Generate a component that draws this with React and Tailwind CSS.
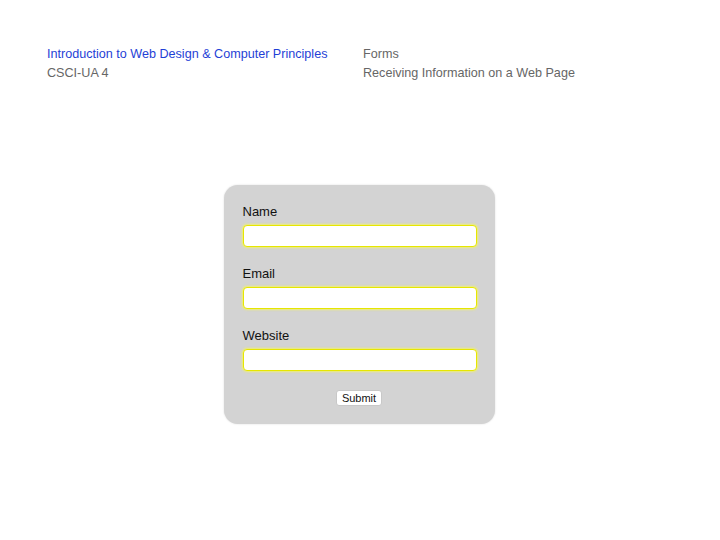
import React from 'react';

const Field = ({ label }) => (
  <div className="flex flex-col">
    <label className="text-[13px] leading-4 text-[#111]">{label}</label>
    <input
      type="text"
      className="mt-[5px] h-[22px] w-[234px] rounded-[4px] border border-[#e6e600] bg-white shadow-[0_0_2px_1px_rgba(245,245,90,0.8)] outline-none"
    />
  </div>
);

const App = () => {
  return (
    <div className="relative h-[540px] w-[720px] bg-white font-['Helvetica','Liberation_Sans',Arial,sans-serif]">
      <div className="flex px-[47px] pt-[45px] text-[12.6px] leading-[19px]">
        <div className="w-[316px]">
          <p className="text-[#1f3fd6]">Introduction to Web Design &amp; Computer Principles</p>
          <p className="text-[#666]">CSCI-UA 4</p>
        </div>
        <div>
          <p className="text-[#666]">Forms</p>
          <p className="text-[#666]">Receiving Information on a Web Page</p>
        </div>
      </div>

      <div className="mt-[102px] flex justify-center">
        <form className="ml-[-2px] flex w-[271px] flex-col gap-[19px] rounded-[14px] bg-[#d3d3d3] px-[19px] pb-[18px] pt-[19px] shadow-[0_0_2px_rgba(0,0,0,0.15)]">
          <Field label="Name" />
          <Field label="Email" />
          <Field label="Website" />
          <div className="flex justify-center">
            <button
              type="button"
              className="h-[16px] rounded-[3px] border border-[#c8c8c8] bg-white px-[5px] text-[11px] leading-[14px] text-[#111]"
            >
              Submit
            </button>
          </div>
        </form>
      </div>
    </div>
  );
};

export default App;
